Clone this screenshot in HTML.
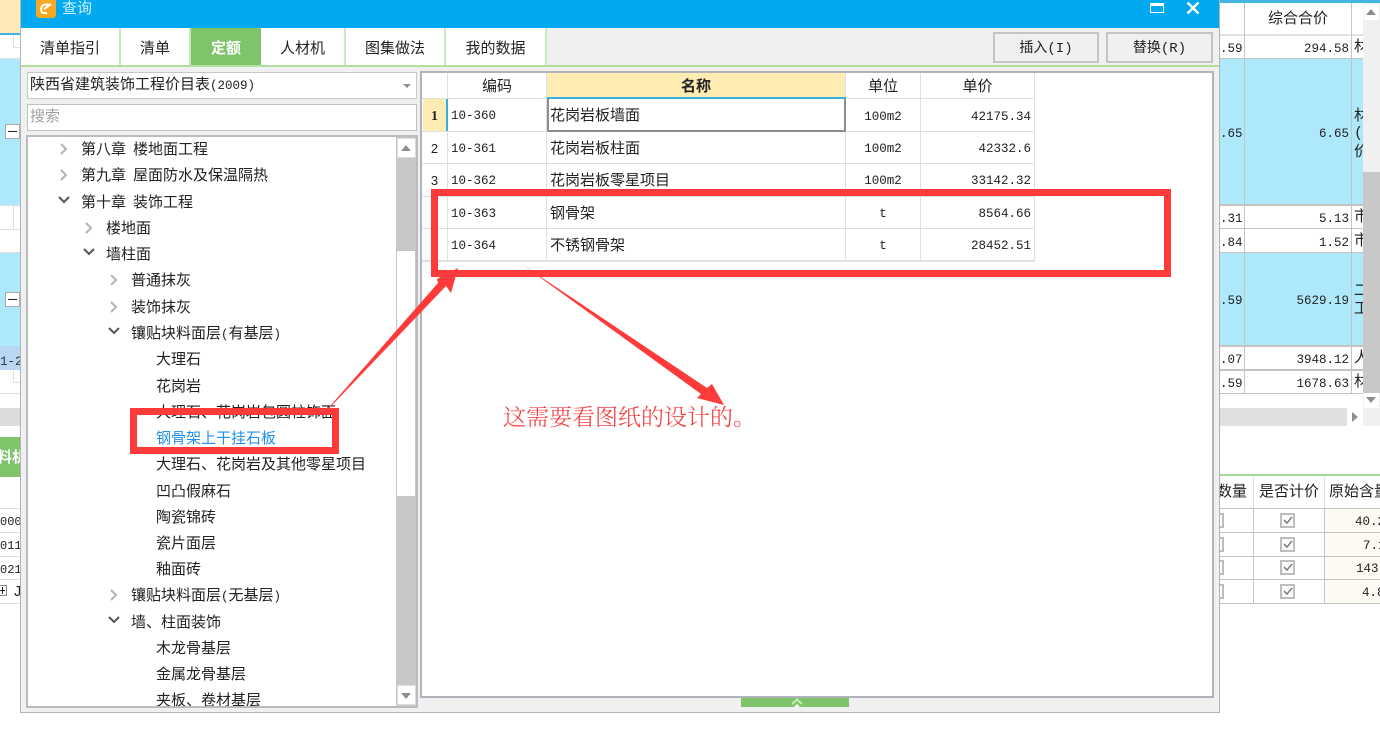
<!DOCTYPE html>
<html lang="zh">
<head>
<meta charset="utf-8">
<title>查询</title>
<style>
html,body{margin:0;padding:0;background:#fff}
#r{position:relative;width:1380px;height:729px;overflow:hidden;background:#fff;font-family:"Liberation Mono","WenQuanYi Zen Hei","Noto Sans CJK SC",monospace;font-size:15px;color:#222;filter:blur(.3px)}
#r div{position:absolute;box-sizing:border-box;white-space:nowrap}
.t{height:26px;line-height:26px;font-size:15px;color:#222}
.t span{font-size:12.5px}
.t i{font-style:normal;margin-left:7px}
.n{font-size:12.5px;line-height:20px;height:20px;text-align:right;color:#222}
.l{background:#c4c4c4}
.g{background:#e0e0e0}
.tab{top:28px;height:38px;line-height:44px;text-align:center;background:#fff;border-right:2px solid #c8ebbd;font-size:15px;color:#222}
.btn{top:32px;height:31px;background:#f0f0f0;border:2px solid #c4c4c4;text-align:center;line-height:31px;font-size:14px;color:#222}
.c{height:20px;line-height:20px;font-size:12.5px;color:#222}
.h{height:24px;line-height:24px;font-size:15px;text-align:center;color:#222}
.cb{left:1280px;width:15px;height:15px;border:2px solid #bdbdbd;background:#fafafa}
</style>
</head>
<body>
<div id="r">

<!-- left background strip -->
<div style="left:0;top:0;width:21px;height:33px;background:#fdeab8"></div>
<div style="left:0;top:33px;width:21px;height:2px;background:#3fb4e2"></div>
<div style="left:0;top:59px;width:21px;height:146px;background:#ade8fb"></div>
<div style="left:0;top:253px;width:21px;height:93px;background:#ade8fb"></div>
<div style="left:0;top:346px;width:21px;height:24px;background:#b9d6f4"></div>
<div style="left:0;top:354px;width:21px;height:16px;font-size:12.5px;line-height:16px;color:#333">1-2</div>
<div class="g" style="left:0;top:58px;width:21px;height:1px"></div>
<div class="g" style="left:0;top:205px;width:21px;height:1px"></div>
<div class="g" style="left:0;top:229px;width:21px;height:1px"></div>
<div class="g" style="left:0;top:252px;width:21px;height:1px"></div>
<div class="g" style="left:0;top:393px;width:21px;height:1px"></div>
<div class="g" style="left:13px;top:35px;width:1px;height:12px"></div>
<div class="g" style="left:13px;top:47px;width:8px;height:1px"></div>
<div class="g" style="left:13px;top:205px;width:1px;height:24px"></div>
<div class="g" style="left:13px;top:370px;width:1px;height:12px"></div>
<div class="g" style="left:13px;top:382px;width:8px;height:1px"></div>
<div style="left:5px;top:124px;width:15px;height:15px;background:#fff;border:1px solid #aaa"></div>
<div style="left:8px;top:131px;width:9px;height:1px;background:#222"></div>
<div style="left:5px;top:292px;width:15px;height:15px;background:#fff;border:1px solid #aaa"></div>
<div style="left:8px;top:299px;width:9px;height:1px;background:#222"></div>
<div style="left:0;top:408px;width:21px;height:18px;background:#dcdcdc"></div>
<div style="left:0;top:437px;width:21px;height:40px;background:#7fc36b;color:#fff;font-weight:bold;font-size:15px;line-height:43px;overflow:hidden"><span style="position:absolute;left:-3px;width:40px">料机</span></div>
<div class="g" style="left:0;top:508px;width:21px;height:1px"></div>
<div class="g" style="left:0;top:532px;width:21px;height:1px"></div>
<div class="g" style="left:0;top:556px;width:21px;height:1px"></div>
<div class="g" style="left:0;top:579px;width:21px;height:1px"></div>
<div class="g" style="left:0;top:603px;width:21px;height:1px"></div>
<div class="c" style="left:0;top:512px;width:21px;overflow:hidden;font-size:12px">000</div>
<div class="c" style="left:0;top:536px;width:21px;overflow:hidden;font-size:12px">011</div>
<div class="c" style="left:0;top:560px;width:21px;overflow:hidden;font-size:12px">021</div>
<div style="left:-3px;top:585px;width:10px;height:11px;border:1px solid #888"></div>
<div style="left:0;top:590px;width:5px;height:1px;background:#222"></div>
<div style="left:2px;top:587px;width:1px;height:7px;background:#222"></div>
<div class="c" style="left:13px;top:583px;width:8px;overflow:hidden;font-size:15px">J</div>

<!-- right background strip -->
<div style="left:1220px;top:0;width:160px;height:3px;background:#45b6e3"></div>
<div style="left:1220px;top:59px;width:143px;height:146px;background:#ade8fb"></div>
<div style="left:1220px;top:253px;width:143px;height:93px;background:#ade8fb"></div>
<div class="l" style="left:1220px;top:34px;width:143px;height:2px;opacity:.5"></div>
<div class="l" style="left:1220px;top:58px;width:143px;height:1px"></div>
<div class="l" style="left:1220px;top:204px;width:143px;height:2px"></div>
<div class="l" style="left:1220px;top:228px;width:143px;height:1px"></div>
<div class="l" style="left:1220px;top:252px;width:143px;height:1px"></div>
<div class="l" style="left:1220px;top:345px;width:143px;height:2px"></div>
<div class="l" style="left:1220px;top:369px;width:143px;height:2px"></div>
<div class="l" style="left:1220px;top:393px;width:143px;height:1px"></div>
<div class="l" style="left:1244px;top:3px;width:1px;height:391px"></div>
<div class="l" style="left:1351px;top:3px;width:1px;height:391px"></div>
<div class="h" style="left:1245px;top:8px;width:106px;font-size:15px">综合合价</div>
<div class="n" style="left:1220px;top:39px;width:21px">.59</div>
<div class="n" style="left:1245px;top:39px;width:104px">294.58</div>
<div class="n" style="left:1220px;top:124px;width:21px">.65</div>
<div class="n" style="left:1245px;top:124px;width:104px">6.65</div>
<div class="n" style="left:1220px;top:209px;width:21px">.31</div>
<div class="n" style="left:1245px;top:209px;width:104px">5.13</div>
<div class="n" style="left:1220px;top:233px;width:21px">.84</div>
<div class="n" style="left:1245px;top:233px;width:104px">1.52</div>
<div class="n" style="left:1220px;top:291px;width:21px">.59</div>
<div class="n" style="left:1245px;top:291px;width:104px">5629.19</div>
<div class="n" style="left:1220px;top:350px;width:21px">.07</div>
<div class="n" style="left:1245px;top:350px;width:104px">3948.12</div>
<div class="n" style="left:1220px;top:374px;width:21px">.59</div>
<div class="n" style="left:1245px;top:374px;width:104px">1678.63</div>
<div class="t" style="left:1354px;top:35px;width:9px;overflow:hidden">材</div>
<div class="t" style="left:1354px;top:104px;width:9px;overflow:hidden">材</div>
<div class="t" style="left:1354px;top:121px;width:9px;overflow:hidden">(</div>
<div class="t" style="left:1354px;top:140px;width:9px;overflow:hidden">价</div>
<div class="t" style="left:1354px;top:205px;width:9px;overflow:hidden">市</div>
<div class="t" style="left:1354px;top:229px;width:9px;overflow:hidden">市</div>
<div class="t" style="left:1354px;top:279px;width:9px;overflow:hidden">二</div>
<div class="t" style="left:1354px;top:297px;width:9px;overflow:hidden">工</div>
<div class="t" style="left:1354px;top:346px;width:9px;overflow:hidden">人</div>
<div class="t" style="left:1354px;top:370px;width:9px;overflow:hidden">材</div>
<!-- right scrollbar -->
<div style="left:1363px;top:3px;width:17px;height:404px;background:#f0f0f0"></div>
<div style="left:1363px;top:172px;width:17px;height:221px;background:#c8c8c8"></div>
<div style="left:1364px;top:4px;width:15px;height:16px;background:#fff"></div>
<div style="left:1366px;top:9px;width:0;height:0;border-left:5px solid transparent;border-right:5px solid transparent;border-bottom:6px solid #8a8f96"></div>
<div style="left:1364px;top:393px;width:15px;height:14px;background:#fff"></div>
<div style="left:1366px;top:397px;width:0;height:0;border-left:5px solid transparent;border-right:5px solid transparent;border-top:6px solid #8a8f96"></div>
<div style="left:1220px;top:408px;width:160px;height:18px;background:#f0f0f0"></div>
<div style="left:1220px;top:408px;width:127px;height:18px;background:#e0e0e0"></div>
<div style="left:1347px;top:408px;width:16px;height:18px;background:#fff"></div>
<div style="left:1352px;top:412px;width:0;height:0;border-top:5px solid transparent;border-bottom:5px solid transparent;border-left:6px solid #8a8f96"></div>

<!-- bottom right grid -->
<div style="left:1220px;top:474px;width:160px;height:2px;background:#a4dc92"></div>
<div class="h" style="left:1217px;top:481px;width:30px;text-align:left">数量</div>
<div class="h" style="left:1254px;top:481px;width:70px;font-size:15px">是否计价</div>
<div class="h" style="left:1329px;top:481px;width:70px;text-align:left">原始含量</div>
<div style="left:1325px;top:509px;width:55px;height:94px;background:#fdf9f3"></div>
<div class="l" style="left:1220px;top:508px;width:160px;height:1px"></div>
<div class="l" style="left:1220px;top:532px;width:160px;height:1px"></div>
<div class="l" style="left:1220px;top:556px;width:160px;height:1px"></div>
<div class="l" style="left:1220px;top:579px;width:160px;height:1px"></div>
<div class="l" style="left:1220px;top:603px;width:160px;height:1px"></div>
<div class="g" style="left:1253px;top:477px;width:1px;height:31px"></div>
<div class="g" style="left:1324px;top:477px;width:1px;height:31px"></div>
<div class="l" style="left:1253px;top:509px;width:1px;height:94px"></div>
<div class="l" style="left:1324px;top:509px;width:1px;height:94px"></div>
<div class="n" style="left:1355px;top:512px;width:40px;text-align:left">40.2</div>
<div class="n" style="left:1363px;top:536px;width:30px;text-align:left">7.1</div>
<div class="n" style="left:1356px;top:559px;width:40px;text-align:left">143.</div>
<div class="n" style="left:1362px;top:583px;width:30px;text-align:left">4.8</div>
<div style="left:1214px;top:513px;width:10px;height:15px;border:2px solid #bdbdbd"></div>
<div style="left:1214px;top:537px;width:10px;height:15px;border:2px solid #bdbdbd"></div>
<div style="left:1214px;top:560px;width:10px;height:15px;border:2px solid #bdbdbd"></div>
<div style="left:1214px;top:584px;width:10px;height:15px;border:2px solid #bdbdbd"></div>
<div class="cb" style="top:513px"><svg width="11" height="11" style="display:block"><path d="M2 5l3 3 5-6" fill="none" stroke="#666a80" stroke-width="1.3"/></svg></div>
<div class="cb" style="top:537px"><svg width="11" height="11" style="display:block"><path d="M2 5l3 3 5-6" fill="none" stroke="#666a80" stroke-width="1.3"/></svg></div>
<div class="cb" style="top:560px"><svg width="11" height="11" style="display:block"><path d="M2 5l3 3 5-6" fill="none" stroke="#666a80" stroke-width="1.3"/></svg></div>
<div class="cb" style="top:584px"><svg width="11" height="11" style="display:block"><path d="M2 5l3 3 5-6" fill="none" stroke="#666a80" stroke-width="1.3"/></svg></div>

<!-- dialog -->
<div style="left:20px;top:0;width:1200px;height:713px;background:#f0f0f0;border:1px solid #b4b4b4;border-top:0"></div>
<div style="left:21px;top:0;width:1198px;height:28px;background:#00a9f0"></div>
<svg style="position:absolute;left:36px;top:0" width="20" height="18" viewBox="0 0 20 18"><path d="M0 0H20V14Q20 18 16 18H4Q0 18 0 14Z" fill="#f9a825"/><path d="M13 5Q6 3 5 9Q5 14 11 13M8 9L15 4" fill="none" stroke="#fff" stroke-width="2"/></svg>
<div style="left:62px;top:0;height:18px;line-height:19px;font-size:15px;color:#d4f1ff">查询</div>
<div style="left:1150px;top:3px;width:14px;height:10px;border:1.5px solid #fff;border-top-width:3px"></div>
<svg style="position:absolute;left:1186px;top:2px" width="14" height="12" viewBox="0 0 14 12"><path d="M1.500 .5L12.500 11.500M12.500 .5L1.500 11.500" stroke="#fff" stroke-width="2.400"/></svg>

<!-- tabs -->
<div class="tab" style="left:21px;width:100px">清单指引</div>
<div class="tab" style="left:121px;width:70px">清单</div>
<div class="tab" style="left:191px;width:70px;background:#7fc36b;color:#fff;font-weight:bold;border-right:0">定额</div>
<div class="tab" style="left:261px;width:85px">人材机</div>
<div class="tab" style="left:346px;width:100px">图集做法</div>
<div class="tab" style="left:446px;width:101px">我的数据</div>
<div style="left:21px;top:65px;width:1198px;height:2px;background:#b0dfa0"></div>
<div class="btn" style="left:993px;width:106px">插入(I)</div>
<div class="btn" style="left:1106px;width:107px">替换(R)</div>

<!-- combo & search -->
<div style="left:27px;top:72px;width:390px;height:27px;background:#fff;border:1px solid #c8c8c8;line-height:26px;padding-left:2px;font-size:15px">陕西省建筑装饰工程价目表<span style="font-size:12.5px">(2009)</span></div>
<div style="left:403px;top:84px;width:0;height:0;border-left:4px solid transparent;border-right:4px solid transparent;border-top:4px solid #8a8f96"></div>
<div style="left:27px;top:104px;width:390px;height:27px;background:#fff;border:1px solid #c0c0c0;line-height:26px;padding-left:2px;font-size:15px;color:#a0a0a0">搜索</div>

<!-- tree -->
<div style="left:26px;top:135px;width:392px;height:573px;background:#fff;border:2px solid #b8bcc2;overflow:hidden">
<div class="t" style="left:53px;top:1px">第八章<i>楼地面工程</i></div>
<div class="t" style="left:53px;top:27px">第九章<i>屋面防水及保温隔热</i></div>
<div class="t" style="left:53px;top:54px">第十章<i>装饰工程</i></div>
<div class="t" style="left:78px;top:80px">楼地面</div>
<div class="t" style="left:78px;top:106px">墙柱面</div>
<div class="t" style="left:103px;top:132px">普通抹灰</div>
<div class="t" style="left:103px;top:159px">装饰抹灰</div>
<div class="t" style="left:103px;top:185px">镶贴块料面层<span>(</span>有基层<span>)</span></div>
<div class="t" style="left:128px;top:211px">大理石</div>
<div class="t" style="left:128px;top:238px">花岗岩</div>
<div class="t" style="left:128px;top:264px">大理石、花岗岩包圆柱饰面</div>
<div class="t" style="left:128px;top:290px;color:#1e90f0">钢骨架上干挂石板</div>
<div class="t" style="left:128px;top:316px">大理石、花岗岩及其他零星项目</div>
<div class="t" style="left:128px;top:343px">凹凸假麻石</div>
<div class="t" style="left:128px;top:369px">陶瓷锦砖</div>
<div class="t" style="left:128px;top:395px">瓷片面层</div>
<div class="t" style="left:128px;top:421px">釉面砖</div>
<div class="t" style="left:103px;top:447px">镶贴块料面层<span>(</span>无基层<span>)</span></div>
<div class="t" style="left:103px;top:474px">墙、柱面装饰</div>
<div class="t" style="left:128px;top:500px">木龙骨基层</div>
<div class="t" style="left:128px;top:526px">金属龙骨基层</div>
<div class="t" style="left:128px;top:552px">夹板、卷材基层</div>
<svg style="position:absolute;left:0;top:0" width="120" height="571" fill="none" stroke-width="2">
<path d="M33 7l5 5-5 5M33 33l5 5-5 5M58 86l5 5-5 5M83 138l5 5-5 5M83 165l5 5-5 5M83 453l5 5-5 5" stroke="#b4b4b4"/>
<path d="M31 60l5 5 5-5M56 112l5 5 5-5M81 191l5 5 5-5M81 480l5 5 5-5" stroke="#555"/>
</svg>
<div style="left:368px;top:0;width:20px;height:569px;background:#c8c8c8"></div>
<div style="left:369px;top:1px;width:19px;height:20px;background:#fff;border:1px solid #ddd"></div>
<div style="left:373px;top:8px;width:0;height:0;border-left:5px solid transparent;border-right:5px solid transparent;border-bottom:6px solid #8a8f96"></div>
<div style="left:368px;top:113px;width:20px;height:247px;background:#fff;border:1px solid #c4c4c4"></div>
<div style="left:369px;top:548px;width:19px;height:20px;background:#fff;border:1px solid #ddd"></div>
<div style="left:373px;top:556px;width:0;height:0;border-left:5px solid transparent;border-right:5px solid transparent;border-top:6px solid #8a8f96"></div>
</div>

<!-- right panel -->
<div style="left:420px;top:71px;width:794px;height:627px;background:#fff;border:2px solid #b0b4ba"></div>
<div style="left:422px;top:98px;width:613px;height:1px" class="g"></div>
<div style="left:547px;top:73px;width:298px;height:25px;background:#feecb3"></div>
<div style="left:423px;top:99px;width:23px;height:32px;background:#feecb3"></div>
<div style="left:446px;top:99px;width:2px;height:32px;background:#36aee0"></div>
<div class="g" style="left:422px;top:131px;width:613px;height:1px"></div>
<div class="g" style="left:422px;top:163px;width:613px;height:1px"></div>
<div class="g" style="left:422px;top:196px;width:613px;height:1px"></div>
<div class="g" style="left:422px;top:228px;width:613px;height:1px"></div>
<div class="g" style="left:422px;top:260px;width:613px;height:2px"></div>
<div class="g" style="left:447px;top:132px;width:1px;height:129px"></div>
<div class="g" style="left:447px;top:73px;width:1px;height:25px"></div>
<div class="g" style="left:546px;top:73px;width:1px;height:188px"></div>
<div class="g" style="left:845px;top:73px;width:1px;height:188px"></div>
<div class="g" style="left:920px;top:73px;width:1px;height:188px"></div>
<div class="g" style="left:1034px;top:73px;width:1px;height:188px"></div>
<div style="left:547px;top:99px;width:299px;height:33px;border:2px solid #8e8e8e;border-top:0;background:#fff"></div>
<div style="left:547px;top:97px;width:299px;height:2px;background:#36aee0"></div>
<div class="h" style="left:448px;top:76px;width:98px">编码</div>
<div class="h" style="left:547px;top:76px;width:298px;font-weight:bold">名称</div>
<div class="h" style="left:846px;top:76px;width:74px">单位</div>
<div class="h" style="left:921px;top:76px;width:113px">单价</div>
<div class="h" style="left:423px;top:105px;width:23px;font-family:'Liberation Serif',serif;font-weight:bold;font-size:14px">1</div>
<div class="h" style="left:423px;top:137px;width:23px;font-size:13px;font-family:'Liberation Sans',sans-serif">2</div>
<div class="h" style="left:423px;top:169px;width:23px;font-size:13px;font-family:'Liberation Sans',sans-serif">3</div>
<div class="c" style="left:451px;top:106px">10-360</div>
<div class="c" style="left:451px;top:139px">10-361</div>
<div class="c" style="left:451px;top:171px">10-362</div>
<div class="c" style="left:451px;top:204px">10-363</div>
<div class="c" style="left:451px;top:236px">10-364</div>
<div class="t" style="left:550px;top:104px">花岗岩板墙面</div>
<div class="t" style="left:550px;top:137px">花岗岩板柱面</div>
<div class="t" style="left:550px;top:169px">花岗岩板零星项目</div>
<div class="t" style="left:550px;top:202px">钢骨架</div>
<div class="t" style="left:550px;top:234px">不锈钢骨架</div>
<div class="c" style="left:846px;top:107px;width:74px;text-align:center">100m2</div>
<div class="c" style="left:846px;top:139px;width:74px;text-align:center">100m2</div>
<div class="c" style="left:846px;top:171px;width:74px;text-align:center">100m2</div>
<div class="c" style="left:846px;top:204px;width:74px;text-align:center">t</div>
<div class="c" style="left:846px;top:236px;width:74px;text-align:center">t</div>
<div class="n" style="left:921px;top:107px;width:110px">42175.34</div>
<div class="n" style="left:921px;top:139px;width:110px">42332.6</div>
<div class="n" style="left:921px;top:171px;width:110px">33142.32</div>
<div class="n" style="left:921px;top:204px;width:110px">8564.66</div>
<div class="n" style="left:921px;top:236px;width:110px">28452.51</div>

<!-- bottom handle -->
<div style="left:741px;top:698px;width:108px;height:9px;background:#7fc36b"></div>
<svg style="position:absolute;left:790px;top:698px" width="14" height="9" viewBox="0 0 14 9"><path d="M2 6L7 1.500L12 6" fill="none" stroke="#c8ebbd" stroke-width="2"/><path d="M4 9L7 6L10 9Z" fill="#fff"/></svg>

<!-- annotations -->
<svg style="position:absolute;left:0;top:0" width="1380" height="729">
<path d="M317 421L438 283L437 279L458 268L451 293L446 286Z" fill="#ff3a3a"/>
<path d="M523 265L707 388L712 384L724 405L697 398L701 394Z" fill="#ff3a3a"/>
</svg>
<div style="left:431px;top:189px;width:740px;height:88px;border:7px solid #ff3a3a"></div>
<div style="left:130px;top:408px;width:209px;height:46px;border:7px solid #ff3a3a"></div>
<div style="left:503px;top:403px;height:26px;line-height:26px;font-size:23px;color:#f53b3b;font-family:'Noto Serif CJK SC','Liberation Serif',serif;font-weight:300">这需要看图纸的设计的。</div>

</div>
</body>
</html>
